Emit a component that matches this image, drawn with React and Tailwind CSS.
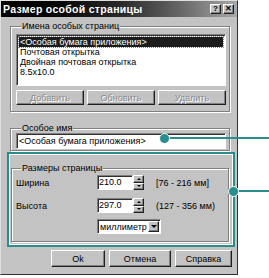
import React from 'react';

const raised = 'bg-[#c3c3c3] border border-t-white border-l-white border-r-[#202020] border-b-[#202020] shadow-[inset_-1px_-1px_0_#808080]';
const sunken = 'bg-white border border-t-[#808080] border-l-[#808080] border-r-white border-b-white shadow-[inset_1px_1px_0_#303030]';
const etched = 'border border-[#808080] shadow-[inset_1px_1px_0_#fff,1px_1px_0_#fff]';

const Group = ({ title, className = '', children }) => (
    <fieldset className={`${etched} ${className}`}>
        <legend className="ml-[5px] px-[1px] h-[10px] leading-[10px] bg-[#c3c3c3]">{title}</legend>
        {children}
    </fieldset>
);

const Button = ({ label, disabled, className = '' }) => (
    <div className={`${raised} flex items-center justify-center ${className}`}>
        <span className={disabled ? 'text-[#8a8a8a] [text-shadow:1px_1px_0_#fff]' : ''}>{label}</span>
    </div>
);

const SizeRow = ({ label, value, range }) => (
    <div className="flex items-center h-[15px]">
        <span className="w-[81px]">{label}</span>
        <div className={`${sunken} w-[36px] h-[15px] pl-[1px] leading-[13px] text-[9px]`}>{value}</div>
        <div className="flex flex-col w-[11px] h-[15px]">
            <div className={`${raised} flex-1 flex items-center justify-center`}>
                <div className="w-0 h-0 border-x-[2px] border-x-transparent border-b-[2px] border-b-black" />
            </div>
            <div className={`${raised} flex-1 flex items-center justify-center`}>
                <div className="w-0 h-0 border-x-[2px] border-x-transparent border-t-[2px] border-t-black" />
            </div>
        </div>
        <span className="ml-[12px]">{range}</span>
    </div>
);

const items = ['<Особая бумага приложения>', 'Почтовая открытка', 'Двойная почтовая открытка', '8.5x10.0'];

export default function App() {
    return (
        <div className="relative w-[269px] h-[278px] bg-white overflow-hidden font-['Liberation_Sans',Arial,sans-serif] text-[9px] leading-[10px] text-black">
            <div className="w-[238px] h-[275px] bg-[#c3c3c3] border border-t-[#dfdfdf] border-l-[#dfdfdf] border-r-[#303030] border-b-[#303030] flex flex-col">
                {/* title bar */}
                <div className="h-[16px] flex items-center pl-[2px] pr-[3px] bg-gradient-to-r from-black via-[#282828] to-[#a8a8a8]">
                    <span className="text-white font-bold text-[10.5px] tracking-[0.3px]">Размер особой страницы</span>
                    <div className="ml-auto flex gap-[2px]">
                        <div className={`${raised} w-[11px] h-[10px] flex items-center justify-center font-bold text-[8px] leading-none`}>?</div>
                        <div className={`${raised} w-[11px] h-[10px] flex items-center justify-center font-bold text-[8px] leading-none`}>✕</div>
                    </div>
                </div>

                <div className="pl-[9px] pr-[7px] flex flex-col">
                    <Group title="Имена особых страниц" className="mt-[4px] pl-[5px] pr-[3px] pb-[6px]">
                        <div className={`${sunken} mt-[3px] h-[52px] p-[2px]`}>
                            {items.map((item, i) => (
                                <div
                                    key={i}
                                    className={`h-[10px] leading-[10px] pl-[1px] ${i === 0 ? 'bg-[#1c1c1c] text-white outline-1 outline-dotted outline-[#888]' : ''}`}
                                >
                                    {item}
                                </div>
                            ))}
                        </div>
                        <div className="mt-[4px] grid grid-cols-3 gap-[3px] h-[15px]">
                            <Button label="Добавить" disabled />
                            <Button label="Обновить" disabled />
                            <Button label="Удалить" disabled />
                        </div>
                    </Group>

                    <Group title="Особое имя" className="mt-[11px] pl-[5px] pr-[3px] pb-[1px]">
                        <div className={`${sunken} h-[16px] pl-[2px] leading-[14px]`}>&lt;Особая бумага приложения&gt;</div>
                    </Group>

                    {/* highlighted area */}
                    <div className="-ml-[3px] -mr-[5px] mt-[1px] border-2 border-[#2a8d8d] shadow-[inset_0_0_0_1px_#fff] pt-[9px] pl-[2px] pr-[4px] pb-[3px]">
                        <Group title="Размеры страницы" className="pl-[4px] pr-[4px] pb-[7px]">
                            <div className="mt-[2px] flex flex-col gap-[8px]">
                                <SizeRow label="Ширина" value="210.0" range="[76 - 216 мм]" />
                                <SizeRow label="Высота" value="297.0" range="(127 - 356 мм)" />
                            </div>
                            <div className="mt-[6px] ml-[81px] flex">
                                <div className={`${sunken} w-[64px] h-[15px] flex items-center pl-[2px] pr-[1px]`}>
                                    <span className="flex-1 overflow-hidden whitespace-nowrap">миллиметр</span>
                                    <div className={`${raised} w-[11px] h-[11px] flex items-center justify-center`}>
                                        <div className="w-0 h-0 border-x-[3px] border-x-transparent border-t-[3px] border-t-black" />
                                    </div>
                                </div>
                            </div>
                        </Group>
                    </div>

                    <div className="mt-[3px] -mr-[2px] flex justify-end gap-[4px] h-[17px]">
                        <Button label="Ok" className="w-[54px]" />
                        <Button label="Отмена" className="w-[62px]" />
                        <Button label="Справка" className="w-[57px]" />
                    </div>
                </div>
            </div>

            {/* callouts */}
            <div className="absolute left-[165px] top-[137px] w-[104px] h-[2px] bg-[#2a8d8d]" />
            <div className="absolute left-[159px] top-[133px] w-[11px] h-[11px] rounded-full bg-[#2a8d8d] border border-white" />
            <div className="absolute left-[234px] top-[190px] w-[35px] h-[2px] bg-[#2a8d8d]" />
            <div className="absolute left-[228px] top-[186px] w-[11px] h-[11px] rounded-full bg-[#2a8d8d] border border-white" />
        </div>
    );
}
